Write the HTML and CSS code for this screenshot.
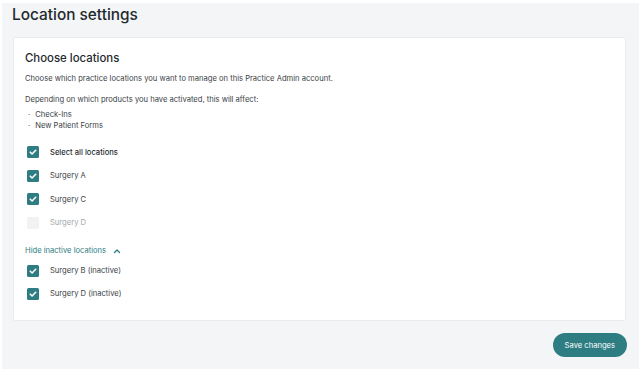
FILE: index.html
```html
<!DOCTYPE html>
<html lang="en">
<head>
  <meta charset="UTF-8">
  <meta name="viewport" content="width=device-width, initial-scale=1.0">
  <title>Location settings</title>
  <link rel="stylesheet" href="styles.css">
</head>
<body>
  <div class="page">
    <h1 class="page-title">Location settings</h1>

    <div class="card">
      <h2>Choose locations</h2>
      <p class="intro">Choose which practice locations you want to manage on this Practice Admin account.</p>
      <p class="note">Depending on which products you have activated, this will affect:</p>
      <ul class="products">
        <li>Check-Ins</li>
        <li>New Patient Forms</li>
      </ul>

      <div class="locations">
        <label class="row strong"><span class="box checked"><svg viewBox="0 0 12 12"><path d="M3.3 6.2 5.1 8 8.7 4.3" /></svg></span>Select all locations</label>
        <label class="row"><span class="box checked"><svg viewBox="0 0 12 12"><path d="M3.3 6.2 5.1 8 8.7 4.3" /></svg></span>Surgery A</label>
        <label class="row"><span class="box checked"><svg viewBox="0 0 12 12"><path d="M3.3 6.2 5.1 8 8.7 4.3" /></svg></span>Surgery C</label>
        <label class="row disabled"><span class="box"></span>Surgery D</label>
      </div>

      <a class="toggle" href="#">Hide inactive locations
        <svg viewBox="0 0 10 10"><path d="M2.5 6.5 5 4 7.5 6.5" /></svg>
      </a>

      <div class="locations inactive">
        <label class="row"><span class="box checked"><svg viewBox="0 0 12 12"><path d="M3.3 6.2 5.1 8 8.7 4.3" /></svg></span>Surgery B (inactive)</label>
        <label class="row"><span class="box checked"><svg viewBox="0 0 12 12"><path d="M3.3 6.2 5.1 8 8.7 4.3" /></svg></span>Surgery D (inactive)</label>
      </div>
    </div>

    <div class="actions">
      <button class="save-btn">Save changes</button>
    </div>
  </div>
</body>
</html>
```

FILE: styles.css
```css
body, html {
  margin: 0;
  padding: 0;
  background-color: white;
  font-family: 'Inter', 'Liberation Sans', sans-serif;
  color: #2b3236;
}

.page {
  margin: 3px 5px 0 2px;
  height: 366px;
  box-sizing: border-box;
  padding: 0 12px 0 11px;
  background-color: #f4f5f7;
  display: flex;
  flex-direction: column;
}

.page-title {
  margin: 0 0 10px -1px;
  font-size: 15.4px;
  line-height: 24px;
  font-weight: 500;
  color: #1f2a2e;
}

.card {
  height: 284px;
  box-sizing: border-box;
  margin-right: 1px;
  padding: 12px 12px 0 11px;
  background-color: white;
  border: 1px solid #eaecef;
  border-radius: 2px;
}

.card h2 {
  margin: 0;
  font-size: 11.4px;
  line-height: 16px;
  font-weight: 500;
  color: #1f2a2e;
}

.card p {
  margin: 0;
  font-size: 7.6px;
  line-height: 10px;
  color: #3a4246;
}

.intro {
  margin-top: 8px !important;
}

.note {
  margin-top: 11px !important;
}

.products {
  list-style: none;
  margin: 4px 0 0 0;
  padding: 0;
  font-size: 7.6px;
  line-height: 11px;
  color: #3a4246;
}

.products li::before {
  content: "\00B7";
  margin: 0 5px 0 3px;
}

.locations {
  display: flex;
  flex-direction: column;
  gap: 11.5px;
  margin-top: 15px;
}

.locations.inactive {
  gap: 11px;
  margin-top: 9px;
}

.row {
  display: flex;
  align-items: center;
  height: 12px;
  font-size: 7.6px;
  color: #3a4246;
}

.row.strong {
  color: #262d31;
  font-weight: 500;
}

.row.disabled {
  color: #a3a8ab;
}

.box {
  width: 12px;
  height: 12px;
  margin: 0 11px 0 2px;
  border-radius: 1.5px;
  background-color: #f1f2f3;
  display: flex;
}

.box.checked {
  background-color: #2e7d82;
}

.box svg {
  width: 12px;
  height: 12px;
  fill: none;
  stroke: white;
  stroke-width: 1.6;
  stroke-linecap: round;
  stroke-linejoin: round;
}

.toggle {
  display: flex;
  align-items: center;
  gap: 6px;
  margin-top: 17px;
  height: 10px;
  font-size: 7.6px;
  color: #2e7d82;
  text-decoration: none;
}

.toggle svg {
  width: 10px;
  height: 10px;
  fill: none;
  stroke: #2e7d82;
  stroke-width: 1.4;
  stroke-linecap: round;
  stroke-linejoin: round;
}

.actions {
  display: flex;
  justify-content: flex-end;
  margin-top: 12px;
}

.save-btn {
  height: 24px;
  padding: 0 12px;
  border: none;
  border-radius: 12px;
  background-color: #2e7d82;
  color: white;
  font-family: 'Inter', 'Liberation Sans', sans-serif;
  font-size: 7.6px;
  cursor: pointer;
}
```
